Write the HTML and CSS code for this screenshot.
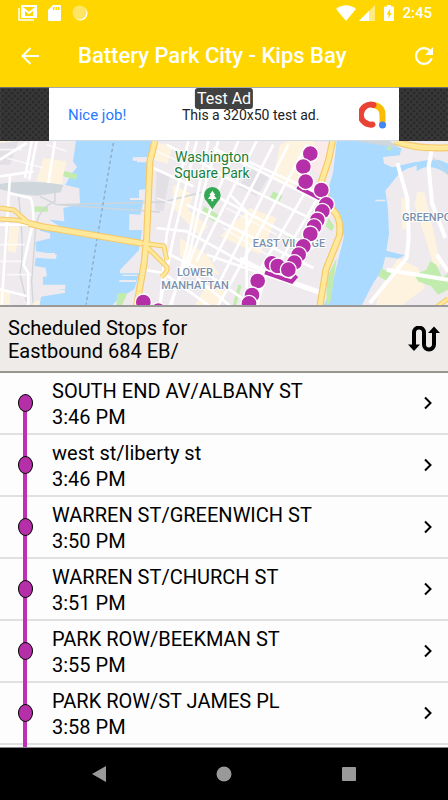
FILE: index.html
```html
<!DOCTYPE html>
<html lang="en">
<head>
    <meta charset="UTF-8">
    <meta name="viewport" content="width=device-width, initial-scale=1.0">
    <title>Battery Park City - Kips Bay</title>
    <link rel="stylesheet" href="styles.css">
</head>
<body>
    <header>
        <div class="status-bar">
            <div class="status-left">
                <svg width="20" height="18" viewBox="0 0 20 18" fill="none" stroke="#fff" stroke-width="2">
                    <rect x="4" y="2" width="14" height="11"/>
                    <path d="M1 4v12h15" stroke-width="1.5"/>
                    <path d="M6 13V5l5 4 5-4v8"/>
                </svg>
                <svg width="14" height="16" viewBox="0 0 14 16">
                    <path fill="#fff" fill-rule="evenodd" d="M5 0h7q1 0 1 1v14q0 1-1 1H1q-1 0-1-1V5zM5 2v3h1.500V2zm2.500 0v3H9V2zM10 2v3h1.500V2z"/>
                </svg>
                <svg width="16" height="16" viewBox="0 0 16 16">
                    <circle cx="8.500" cy="8.500" r="7" fill="#fff"/>
                    <circle cx="7.500" cy="7.500" r="7" fill="#ffe566"/>
                </svg>
            </div>
            <div class="status-right">
                <svg width="20" height="16" viewBox="0 0 20 16"><path fill="#fff" d="M0 4q10-7.500 20 0L10 16z"/></svg>
                <svg width="16" height="16" viewBox="0 0 16 16">
                    <path fill="#ffeb80" d="M16 0v16H0z"/>
                    <path fill="#fff" d="M10 6v10H0z"/>
                </svg>
                <svg class="battery" width="10" height="16" viewBox="0 0 10 16">
                    <path fill="#fff" fill-rule="evenodd" d="M3 0h4v1.500h2q1 0 1 1V15q0 1-1 1H1q-1 0-1-1V2.500q0-1 1-1h2zM6 4L2.500 9.500H4.500v4L7.700 8H6z"/>
                </svg>
                <span>2:45</span>
            </div>
        </div>
        <div class="app-bar">
            <button class="icon-button" aria-label="Back">
                <svg width="18" height="18" viewBox="0 0 18 18" fill="none" stroke="#fff" stroke-width="2">
                    <path d="M18 9H2M9.500 1L1.500 9l8 8"/>
                </svg>
            </button>
            <h1>Battery Park City - Kips Bay</h1>
            <button class="icon-button" aria-label="Refresh">
                <svg width="18" height="18" viewBox="4 4 16 16">
                    <path fill="#fff" d="M17.650 6.350C16.200 4.900 14.210 4 12 4c-4.420 0-7.990 3.580-7.990 8s3.570 8 7.990 8c3.730 0 6.840-2.550 7.730-6h-2.080c-.820 2.330-3.040 4-5.650 4-3.310 0-6-2.690-6-6s2.690-6 6-6c1.660 0 3.140.690 4.220 1.780L13 11h7V4z"/>
                </svg>
            </button>
        </div>
    </header>

    <div class="ad-strip">
        <div class="ad">
            <span class="ad-title">Nice job!</span>
            <span class="ad-text">This a 320x50 test ad.</span>
            <svg class="ad-logo" width="28" height="28" viewBox="0 0 28 28" fill="none" stroke-width="6">
                <path stroke="#fbbc04" d="M14 4q9.500 1 9.500 10v10"/>
                <path stroke="#ea4335" stroke-linecap="round" d="M14.500 4a10 10 0 1 0-1 19.500"/>
                <circle cx="23.500" cy="24" r="3.500" fill="#4285f4"/>
            </svg>
            <span class="ad-label">Test Ad</span>
        </div>
    </div>

    <svg class="map" viewBox="0 0 448 164" preserveAspectRatio="xMidYMid slice" role="img" aria-label="Route map">
        <g transform="translate(0 -3) scale(.33333)">
            <rect width="1344" height="516" fill="#eeeaee"/>
            <!-- blocks -->
            <g fill="#fdf3df">
                <path d="M0 9h35l-12 40H0zM130 60l70 10-15 70-75-10zM28 262l30 5-10 78-25-5zM0 450l30 8v50H0zM100 490h60v20h-60z"/>
                <path d="M472 15l48 8-18 54-40-12zM520 140l60 30-15 45 60 50-30 25-75-80zM540 300l80 50 40 60-60-15-60-40zM840 20l60-30 60 30-80 130-60-30zM750 210l80 30-50 110-120-55zM620 440l60 20-30 50h-70z"/>
                <path d="M1204 180l22-5 5 90-25 10zM1252 160l22 5 30 130 18 90-18 5-60-190zM1145 440l50-80 60 30 20 60-80 60h-70z"/>
            </g>
            <path d="M946 10l52 5-22 110-45-35z" fill="#faeaea"/>
            <g fill="#e2e0e5">
                <path d="M0 15l55-5-25 70H0zM470 100l40 10-20 110-25-5zM760 90l50 20-40 65-55-30z"/>
            </g>
            <!-- rivers -->
            <path fill="#aadaff" d="M228 9h226l-5 50-38-1v15h34l-8 80-20 3v28h14l-10 47-33-3v48h38l-9 60-57 60v10h58l-15 48-50 30-20 23H118l5-31 72-12v-8l-66-9v-30l12-2-4-26-33-5 3-25 60 4 4-13-63-10-2-28 45-11-1-15-30-8-2-13 70 6-40-26 45 5-3-40 50-12-2-47-42-10 20-35 15-18-12-18z"/>
            <path fill="#aadaff" d="M1010 9h158l36 23-5 20-50 5 3 20 25 11 65-15 74-8 28 12v22q-65-40-105-12-35 6-55 37l-28 34 8 55 3 75-8 50 55 14-20 10-38-6-10 40-28 42-35 68H970l25-60 22-90 15-60-25-80-30-40 22-70z"/>
            <path fill="#aadaff" d="M1250 75q50-25 94 18v17q-55-40-94-10z"/>
            <path fill="#eeeaee" d="M398 58h45v10h-45zM390 180h50v6h-50zM392 230h45v45h-50zM358 426h50v6h-50zM367 410h45v4h-45zM125 345h40v16h-34zM122 440h74v14h-76zM1126 185h30v5h-30z"/>
            <path fill="#cfd6dc" d="M0 138q80-15 190 3l-8 22-70 10q-70-5-112-20zM1070 9h98l30 22z"/>
            <!-- parks -->
            <g fill="#c1ecae">
                <path d="M193 99l39 10-4 16-39-10zM105 205l39 2v14h-42zM612 205l48 28-14 20-42-26zM352 466h30l-15 35h-18zM820 160l28 14-12 18-27-12zM980 420l30-60-18 130-12 15zM1135 415l10-25 32 18-10 24zM1244 410l35-15 12-25 18 10 18 40 17-15v50l-30 15-20-25-40-15zM870 290l35 15-15 35-40-20zM1158 30l18-5-6 15zM715 440l10 3-20 70h-10zM985 240l18 25-8 15-18-15z"/>
            </g>
            <!-- rails and ferry line -->
            <g fill="none" stroke="#d0d6da" stroke-width="4">
                <path d="M55 170q20 160 5 240l20 80M165 140v50q-50 20-58 80l-12 160 4 65M120 175l50 25 320-8 120-30M170 200l310 22M1300 60l44 50"/>
            </g>
            <path d="M340 15L258 500" fill="none" stroke="#8398ab" stroke-width="3" stroke-dasharray="10 8"/>
            <!-- streets -->
            <g fill="none" stroke="#fff" stroke-width="8">
                <path d="M95 9L75 120M110 9L87 125M0 115l100-15M165 10l-20 125M30 115L5 500M25 165l65 15q10 10 10 70l-30 130 15 25v100M0 454l80 20M0 260h90M0 65l80-50"/>
                <path d="M565 9L500 290l-20 210M590 9L520 300l-40 200M625 9L560 330l-45 170M655 9L610 160l-40 180-60 160M715 9L560 390M770 9L590 370M820 20L640 370M865 20L660 430M920 20L790 260 650 510M940 120L760 430M960 170L810 420"/>
                <path d="M460 90l120 55M500 20l170 90M640 30l320 160M470 270l90 10 180 100 220 80M490 340l120 60 130 90M700 50l240 110M660 110l310 150M640 170l300 160M560 200l380 190M620 350l350 120M430 395l60 10 140 100M590 420l120 100M690 170l50 50v300M720 360l80 40-30 110"/>
            </g>
            <g fill="none" stroke="#fff" stroke-width="12" stroke-linejoin="round">
                <path d="M1296 30l-10 55 10 110 40 105M1192 75l30 105 4 120-6 60-110 135M1160 395l60 10 124 20M1310 350l34 50"/>
            </g>
            <g fill="none" stroke="#fff" stroke-width="5" opacity=".7">
                <path d="M0 35h65M20 60l110 30M0 320h75M0 370h65M20 410h75M140 20l60 20M470 40l90 40M470 180l60 20M670 270l130 80M680 210l150 80"/>
            </g>
            <!-- highways -->
            <g fill="none" stroke-linejoin="round">
                <path stroke="#f5c967" stroke-width="21" d="M465 9l-15 60-10 230-8 80-22 123M87 256l40 10 300 50M998 9l-13 60-24 70 35 75q30 25 22 80l-40 100-18 108M1185 9q60 25 159 20"/>
                <path stroke="#f5c967" stroke-width="15" d="M0 210l42 6 45 40M0 243l55 4 35 9M427 316l65 8 8 42M436 322l65 65q3 15-17 30M1310 507l34-25"/>
                <path stroke="#ffe89a" stroke-width="14" d="M465 9l-15 60-10 230-8 80-22 123M87 256l40 10 300 50M998 9l-13 60-24 70 35 75q30 25 22 80l-40 100-18 108M1185 9q60 25 159 20"/>
                <path stroke="#ffe89a" stroke-width="9" d="M0 210l42 6 45 40M0 243l55 4 35 9M427 316l65 8 8 42M436 322l65 65q3 15-17 30M1310 507l34-25"/>
            </g>
            <path d="M637 214l-17-24a25 25 0 1 1 34 0z" fill="#34a853"/>
            <path d="M637 158l9 13h-4l8 12h-10v7h-6v-7h-10l8-12h-4z" fill="#fff"/>
        </g>
        <g class="map-park">
            <text x="212" y="21">Washington</text>
            <text x="212" y="37">Square Park</text>
        </g>
        <g class="map-area">
            <text x="289" y="106">EAST VILLAGE</text>
            <text x="195" y="135">LOWER</text>
            <text x="195" y="148">MANHATTAN</text>
            <text class="map-edge" x="402" y="80">GREENPOINT</text>
        </g>
        <!-- bus route -->
        <g transform="translate(0 -3) scale(.33333)" fill="#b52fa8" stroke="#fff" stroke-width="4">
            <path d="M892 147l78 40M795 403l80 28 15-18" fill="none" stroke="#b52fa8" stroke-width="12"/>
            <circle cx="931" cy="47" r="24"/>
            <circle cx="910" cy="86" r="24"/>
            <circle cx="917" cy="131" r="24"/>
            <circle cx="964" cy="156" r="24"/>
            <circle cx="979" cy="199" r="24"/>
            <circle cx="967" cy="220" r="24"/>
            <circle cx="952" cy="246" r="24"/>
            <circle cx="942" cy="266" r="24"/>
            <circle cx="931" cy="288" r="24"/>
            <circle cx="910" cy="325" r="24"/>
            <circle cx="896" cy="350" r="24"/>
            <circle cx="883" cy="374" r="24"/>
            <circle cx="815" cy="376" r="24"/>
            <circle cx="833" cy="384" r="24"/>
            <circle cx="865" cy="395" r="24"/>
            <circle cx="773" cy="429" r="24"/>
            <circle cx="756" cy="471" r="24"/>
            <circle cx="747" cy="496" r="24"/>
            <circle cx="475" cy="518" r="24"/>
            <circle cx="430" cy="492" r="24"/>
        </g>
    </svg>

    <section class="direction">
        <h2>Scheduled Stops for<br>Eastbound 684 EB/</h2>
        <button class="icon-button" aria-label="Switch direction">
            <svg width="32" height="26" viewBox="0 0 32 26">
                <path d="M6 19V6.500a5 5 0 0 1 10 0v12a5 5 0 0 0 10 0V6" fill="none" stroke="#000" stroke-width="4"/>
                <path d="M0 18.500h12l-6 6.500zM20 7h12l-6-6.500z"/>
            </svg>
        </button>
    </section>

    <ul class="stops" id="stops">
        <!-- filled in below -->
    </ul>

    <nav class="nav-bar">
        <button aria-label="Back"><svg width="14" height="16" viewBox="0 0 14 16"><path d="M14 0v16L0 8z"/></svg></button>
        <button aria-label="Home"><svg width="16" height="16" viewBox="0 0 16 16"><circle cx="8" cy="8" r="7.500"/></svg></button>
        <button aria-label="Recents"><svg width="14" height="14" viewBox="0 0 14 14"><rect width="14" height="14" rx="1"/></svg></button>
    </nav>

    <script>
        const stops = [
            { name: "SOUTH END AV/ALBANY ST", time: "3:46 PM" },
            { name: "west st/liberty st", time: "3:46 PM" },
            { name: "WARREN ST/GREENWICH ST", time: "3:50 PM" },
            { name: "WARREN ST/CHURCH ST", time: "3:51 PM" },
            { name: "PARK ROW/BEEKMAN ST", time: "3:55 PM" },
            { name: "PARK ROW/ST JAMES PL", time: "3:58 PM" }
        ];

        const list = document.getElementById("stops");
        list.innerHTML = stops.map(stop => `
            <li>
                <a class="stop" href="#">
                    <span class="track"><span class="dot"></span></span>
                    <span class="stop-info">
                        <span>${stop.name}</span>
                        <span>${stop.time}</span>
                    </span>
                    <svg width="8" height="14" viewBox="0 0 8 14" fill="none" stroke="#000" stroke-width="2"><path d="M1 1.500L6.500 7 1 12.500"/></svg>
                </a>
            </li>`).join("") + '<li class="more"><span class="track"></span></li>';
    </script>
</body>
</html>
```
FILE: styles.css
```css
* {
    box-sizing: border-box;
}
body {
    font-family: Roboto, "Liberation Sans", sans-serif;
    display: flex;
    flex-direction: column;
    height: 100vh;
    margin: 0;
    overflow: hidden;
    background-color: #fdfdfd;
    color: #000;
}
svg {
    display: block;
}
button {
    padding: 0;
    border: none;
    background: none;
    cursor: pointer;
}
header {
    background-color: #ffd600;
    color: #fff;
}
.status-bar {
    display: flex;
    justify-content: space-between;
    align-items: center;
    height: 25px;
    padding: 0 16px 0 18px;
}
.status-left {
    display: flex;
    align-items: center;
    gap: 10px;
}
.status-right {
    display: flex;
    align-items: center;
    gap: 3px;
    font-size: 15px;
    font-weight: 500;
}
.battery {
    margin: 0 5px 0 6px;
}
.app-bar {
    display: flex;
    align-items: center;
    height: 62px;
    padding: 0 14px 0 20px;
}
.app-bar h1 {
    flex: 1;
    margin: 0 0 0 38px;
    font-size: 22px;
    font-weight: 500;
    line-height: 28px;
    white-space: nowrap;
}
.icon-button {
    display: flex;
    justify-content: center;
    align-items: center;
    min-width: 20px;
}
/* Ad */
.ad-strip {
    display: flex;
    justify-content: center;
    height: 54px;
    background-color: #383838;
    background-image: radial-gradient(#2a2a2a 1px, transparent 2px), radial-gradient(#2a2a2a 1px, transparent 2px);
    background-size: 6px 6px;
    background-position: 0 0, 3px 3px;
    box-shadow: inset 0 1px 1px #777;
}
.ad {
    position: relative;
    display: flex;
    align-items: center;
    width: 350px;
    padding: 2px 12px 0 19px;
    background-color: #fff;
    font-size: 14px;
    border-top: 1px solid #aaa;
    border-bottom: 1px solid #d5dbe3;
}
.ad-title {
    color: #2979ff;
    font-size: 15px;
}
.ad-text {
    flex: 1;
    padding-left: 16px;
    text-align: center;
    color: #222;
}
.ad-label {
    position: absolute;
    top: 0;
    left: 50%;
    transform: translateX(-50%);
    padding: 0 2px;
    border-radius: 3px;
    background-color: #424242;
    color: #fff;
    font-size: 16px;
    line-height: 21px;
    white-space: nowrap;
}
/* Map */
.map {
    flex: none;
    width: 100%;
    height: 164px;
}
.map text {
    text-anchor: middle;
    paint-order: stroke;
    stroke: #fff;
    stroke-width: 2px;
    stroke-linejoin: round;
}
.map-park text {
    fill: #188038;
    font-size: 14px;
}
.map-area text {
    fill: #7b8fab;
    font-size: 11px;
    font-weight: 500;
}
.map-area .map-edge {
    text-anchor: start;
}
/* Direction header */
.direction {
    display: flex;
    justify-content: space-between;
    align-items: center;
    height: 68px;
    padding: 0 8px;
    border-top: 2px solid #999;
    border-bottom: 2px solid #989890;
    background-color: #eeebe8;
}
.direction h2 {
    margin: 0;
    padding-top: 2px;
    font-size: 20px;
    font-weight: 400;
    line-height: 23px;
}
/* Stop list */
.stops {
    flex: 1;
    min-height: 0;
    margin: 0;
    padding: 0;
    list-style: none;
    overflow: hidden;
}
.stop {
    display: flex;
    align-items: center;
    height: 62px;
    padding-right: 16px;
    border-bottom: 2px solid #e0e0e0;
    color: #000;
    text-decoration: none;
}
.track {
    display: flex;
    justify-content: center;
    align-items: center;
    align-self: stretch;
    width: 52px;
    margin-bottom: -2px;
    padding: 0 2px 2px 0;
    background: linear-gradient(#c12fb4, #c12fb4) 23px 0 / 4px 100% no-repeat;
}
li:first-child .track {
    background-position: 23px 31px;
}
.dot {
    width: 15px;
    height: 18px;
    border: 1px solid #000;
    border-radius: 50%;
    background-color: #b52fa8;
}
.stop-info {
    display: flex;
    flex: 1;
    flex-direction: column;
    padding-top: 2px;
    font-size: 20px;
    line-height: 26px;
}
.more .track {
    height: 62px;
}
/* Android buttons */
.nav-bar {
    display: flex;
    justify-content: center;
    align-items: center;
    gap: 110px;
    height: 53px;
    border-top: 1px solid #888;
    background-color: #000;
}
.nav-bar svg {
    fill: #999;
}
```
